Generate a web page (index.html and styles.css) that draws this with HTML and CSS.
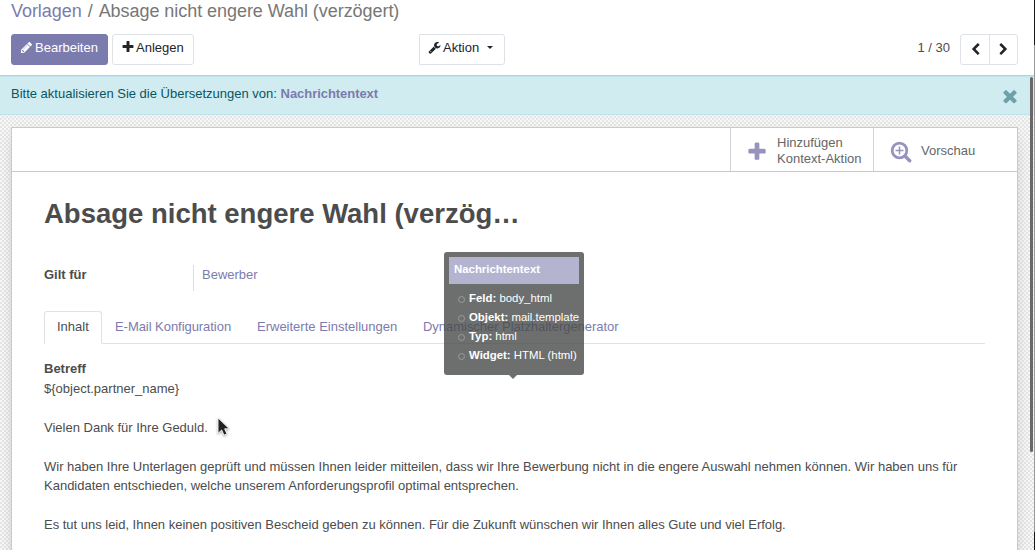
FILE: index.html
```html
<!DOCTYPE html>
<html lang="de">
<head>
<meta charset="utf-8">
<title>Vorlagen</title>
<link rel="stylesheet" href="styles.css">
</head>
<body>
<svg class="defs" width="0" height="0">
  <symbol id="plus" viewBox="0 0 1792 1792"><path d="M1600 736v192q0 40-28 68t-68 28h-416v416q0 40-28 68t-68 28h-192q-40 0-68-28t-28-68v-416h-416q-40 0-68-28t-28-68v-192q0-40 28-68t68-28h416v-416q0-40 28-68t68-28h192q40 0 68 28t28 68v416h416q40 0 68 28t28 68z"/></symbol>
</svg>
<header class="control-panel">
  <div class="breadcrumb"><a class="crumb-link">Vorlagen</a><span class="sep">/</span><span>Absage nicht engere Wahl (verzögert)</span></div>
  <div class="toolbar">
    <div class="buttons">
      <button class="btn primary"><svg class="ico" viewBox="0 0 1792 1792"><path d="M491 1536l91-91-235-235-91 91v107h128v128h107zm523-928q0-22-22-22-10 0-17 7l-542 542q-7 7-7 17 0 22 22 22 10 0 17-7l542-542q7-7 7-17zm-54-192l416 416-832 832h-416v-416zm683 96q0 53-37 90l-166 166-416-416 166-165q36-38 90-38 53 0 91 38l235 234q37 39 37 91z"/></svg><span>Bearbeiten</span></button>
      <button class="btn create"><svg class="ico"><use href="#plus"/></svg><span>Anlegen</span></button>
    </div>
    <button class="btn action"><svg class="ico" viewBox="0 0 1792 1792"><path d="M448 1472q0-26-19-45t-45-19-45 19-19 45 19 45 45 19 45-19 19-45zm644-420l-682 682q-37 37-90 37-52 0-91-37l-106-108q-38-36-38-90 0-53 38-91l681-681q39 98 114.500 173.500t173.500 114.500zm634-435q0 39-23 106-47 134-164.500 217.500t-258.500 83.500q-185 0-316.500-131.500t-131.500-316.500 131.500-316.500 316.500-131.500q58 0 121.500 16.500t107.500 46.500q16 11 16 28t-16 28l-293 169v224l193 107q5-3 79-48.500t135.500-81 70.500-35.500q15 0 23.500 10t8.500 25z"/></svg><span>Aktion</span><i class="caret"></i></button>
    <div class="pager">
      <span class="count">1 / 30</span>
      <div class="pager-group">
        <button class="btn nav"><svg class="chev" viewBox="0 0 1792 1792"><path d="M1427 301l-531 531 531 531q19 19 19 45t-19 45l-166 166q-19 19-45 19t-45-19l-742-742q-19-19-19-45t19-45l742-742q19-19 45-19t45 19l166 166q19 19 19 45t-19 45z"/></svg></button>
        <button class="btn nav"><svg class="chev" viewBox="0 0 1792 1792"><path d="M1363 877l-742 742q-19 19-45 19t-45-19l-166-166q-19-19-19-45t19-45l531-531-531-531q-19-19-19-45t19-45l166-166q19-19 45-19t45 19l742 742q19 19 19 45t-19 45z"/></svg></button>
      </div>
    </div>
  </div>
</header>
<main class="content">
  <div class="alert">
    <div><span class="alert-text">Bitte aktualisieren Sie die Übersetzungen von:</span> <a class="alert-link">Nachrichtentext</a></div>
    <svg class="close" viewBox="0 0 1792 1792"><path d="M1490 1322q0 40-28 68l-136 136q-28 28-68 28t-68-28l-294-294-294 294q-28 28-68 28t-68-28l-136-136q-28-28-28-68t28-68l294-294-294-294q-28-28-28-68t28-68l136-136q28-28 68-28t68 28l294 294 294-294q28-28 68-28t68 28l136 136q28 28 28 68t-28 68l-294 294 294 294q28 28 28 68z"/></svg>
  </div>
  <section class="sheet">
    <div class="stat-buttons">
      <div class="stat stat-add"><svg class="stat-ico"><use href="#plus"/></svg><span>Hinzufügen<br>Kontext-Aktion</span></div>
      <div class="stat stat-preview"><svg class="zoom-ico" viewBox="0 0 22 22"><circle cx="9.500" cy="9.500" r="7.300" fill="none" stroke="currentColor" stroke-width="2.800"/><path d="M15 15l4.700 4.700" stroke="currentColor" stroke-width="3.400" stroke-linecap="round"/><path d="M9.500 5.500v8M5.500 9.500h8" stroke="currentColor" stroke-width="1.500"/></svg><span>Vorschau</span></div>
    </div>
    <div class="sheet-body">
      <h1>Absage nicht engere Wahl (verzög…</h1>
      <div class="field"><label>Gilt für</label><a>Bewerber</a></div>
      <nav class="tabs">
        <a class="tab active">Inhalt</a><a class="tab tab-mail">E-Mail Konfiguration</a><a class="tab tab-adv">Erweiterte Einstellungen</a><a class="tab tab-dyn">Dynamischer Platzhaltergenerator</a>
      </nav>
      <div class="message">
        <strong>Betreff</strong>
        <p>${object.partner_name}</p>
        <p>Vielen Dank für Ihre Geduld.</p>
        <p>Wir haben Ihre Unterlagen geprüft und müssen Ihnen leider mitteilen, dass wir Ihre Bewerbung nicht in die engere Auswahl nehmen können. Wir haben uns für<br>Kandidaten entschieden, welche unserem Anforderungsprofil optimal entsprechen.</p>
        <p class="closing">Es tut uns leid, Ihnen keinen positiven Bescheid geben zu können. Für die Zukunft wünschen wir Ihnen alles Gute und viel Erfolg.</p>
      </div>
    </div>
  </section>
</main>
<div class="tooltip">
  <div class="tooltip-title">Nachrichtentext</div>
  <ul>
    <li><b>Feld:</b> body_html</li>
    <li><b>Objekt:</b> mail.template</li>
    <li><b>Typ:</b> html</li>
    <li><b>Widget:</b> HTML (html)</li>
  </ul>
</div>
<div class="scroll-thumb"></div>
<div class="window-edge"></div>
<svg class="cursor" viewBox="0 0 16 24"><path d="M2 2v17l4-3.700 2.500 5.700 3.300-1.500-2.500-5.500h5z" fill="#222" stroke="#fff" stroke-width="1"/></svg>
</body>
</html>
```
FILE: styles.css
```css
* { box-sizing: border-box; }
body {
  margin: 0;
  width: 1035px;
  height: 550px;
  overflow: hidden;
  position: relative;
  font: 13px/19.5px "Liberation Sans", Arial, sans-serif;
  color: #4c4c4c;
  background: #fff;
}
.defs { position: absolute; }
svg { fill: currentColor; flex: none; }
.control-panel { height: 76px; padding: 0 17px 0 11px; border-bottom: 1px solid #cacaca; }
.breadcrumb { height: 34px; font-size: 18px; line-height: 22px; letter-spacing: -.05px; color: #777; white-space: nowrap; }
.crumb-link { color: #7c7bad; }
.sep { margin: 0 6px 0 6px; }
.toolbar { display: grid; grid-template-columns: 408px 1fr auto; height: 31px; }
.buttons { display: flex; gap: 4px; }
.btn {
  height: 31px;
  display: flex;
  align-items: flex-start;
  padding: 3px 9px;
  border: 1px solid #dee2e6;
  border-radius: 3px;
  background: #fff;
  color: #212529;
  font: inherit;
  white-space: nowrap;
}
.primary { width: 97px; background: #7c7bad; border-color: #7c7bad; color: #fff; }
.create { width: 82px; }
.action { width: 86px; border-radius: 0 3px 3px 0; }
.ico { width: 13px; height: 13px; margin: 3px 2px 0 -1px; }
.create .ico { width: 14px; height: 14px; margin: 2px 1px 0 -1px; }
.caret { margin: 8px 0 0 8px; border: 3px solid transparent; border-top-color: #212529; border-bottom: 0; }
.pager { display: flex; gap: 10px; }
.count { padding-top: 4px; }
.pager-group { display: flex; }
.nav { width: 30px; padding: 8px 8px; border-radius: 3px 0 0 3px; }
.nav + .nav { width: 29px; margin-left: -1px; padding-left: 7px; border-radius: 0 3px 3px 0; }
.chev { width: 13px; height: 13px; }

.content {
  height: 474px;
  overflow: hidden;
  background: repeating-conic-gradient(#e5e5e5 0 25%, #f7f7f7 0 50%) 0 0 / 4px 4px;
}
.alert {
  height: 39px;
  display: flex;
  justify-content: space-between;
  padding: 7px 17px 0 11px;
  border: solid #bee5eb;
  border-width: 1px 0;
  background: #d1ecf1;
  color: #0c5460;
}
.alert-link { color: #7c7bad; font-weight: bold; letter-spacing: -.05px; }
.close { width: 20px; height: 20px; margin: 2px -2px 0 0; color: #6da1aa; }
.sheet {
  width: 1007px;
  height: 440px;
  margin: 12px 0 0 11px;
  background: #fff;
  border: 1px solid #c8c8d3;
  box-shadow: 0 5px 14px -5px rgba(0, 0, 0, .25);
}
.stat-buttons { display: flex; justify-content: flex-end; height: 44px; border-bottom: 1px solid #c8c8d3; color: #666; }
.stat { display: flex; align-items: center; border-left: 1px solid #ced4da; line-height: 16px; }
.stat-add { width: 143px; padding: 2px 0 0 15px; }
.stat-ico { width: 22px; height: 22px; margin: 2px 9px 0 0; color: #9693bf; }
.stat-preview { width: 144px; padding: 2px 0 0 16px; }
.zoom-ico { width: 22px; height: 22px; margin: 2px 9px 0 0; color: #9693bf; }
.sheet-body { padding: 22px 32px; }
h1 { margin: 0; font-size: 27.5px; line-height: 39px; white-space: nowrap; }
.field { display: flex; height: 26px; margin-top: 32px; line-height: 20px; }
label { width: 150px; font-weight: bold; border-right: 1px solid #ddd; }
.field a { padding-left: 8px; color: #7c7bad; }
.tabs { display: flex; height: 33px; margin-top: 20px; border-bottom: 1px solid #dee2e6; }
.tab { height: 33px; padding: 6px 0 0; color: #7c7bad; white-space: nowrap; }
.active { width: 58px; padding: 5px 0 0 12px; border: 1px solid #dee2e6; border-bottom-color: #fff; border-radius: 3px 3px 0 0; color: #495057; }
.tab-mail { width: 142px; margin-left: 13px; letter-spacing: -.05px; }
.tab-adv { width: 166px; }
.tab-dyn { letter-spacing: -.03px; }
.message { padding-top: 15px; line-height: 19px; white-space: nowrap; }
.message strong { display: block; height: 20px; line-height: 20px; }
.message p { margin: 0 0 20px; }
.closing { letter-spacing: -.015px; }

.tooltip {
  position: absolute;
  left: 444px;
  top: 252px;
  width: 140px;
  height: 123px;
  padding: 5px;
  border-radius: 3px;
  background: rgba(73, 75, 74, .8);
  color: #fff;
  font-size: 11.4px;
  line-height: 19px;
}
.tooltip::after { content: ""; position: absolute; left: 65px; top: 123px; border: 4px solid transparent; border-top-color: #6d6f6e; border-bottom: 0; }
.tooltip-title { height: 27px; padding: 3px 5px; background: #b4b4d1; font-weight: bold; }
.tooltip ul { margin: 5px 0 0; padding: 0 0 0 20px; list-style: none; white-space: nowrap; }
.tooltip li::before { content: ""; float: left; width: 5px; height: 5px; margin: 7px 0 0 -11px; border: 1px solid #999b9a; border-radius: 50%; }
.scroll-thumb { position: absolute; left: 1030px; top: 77px; width: 3px; height: 375px; border-radius: 2px; background: #68686a; }
.window-edge { position: absolute; right: 0; top: 0; width: 1px; height: 550px; background: linear-gradient(#171717 45px, #999 45px 532px, #171717 532px); }
.cursor { position: absolute; left: 216px; top: 416px; width: 15px; height: 22px; filter: drop-shadow(0 1px 1px #0005); }
```
